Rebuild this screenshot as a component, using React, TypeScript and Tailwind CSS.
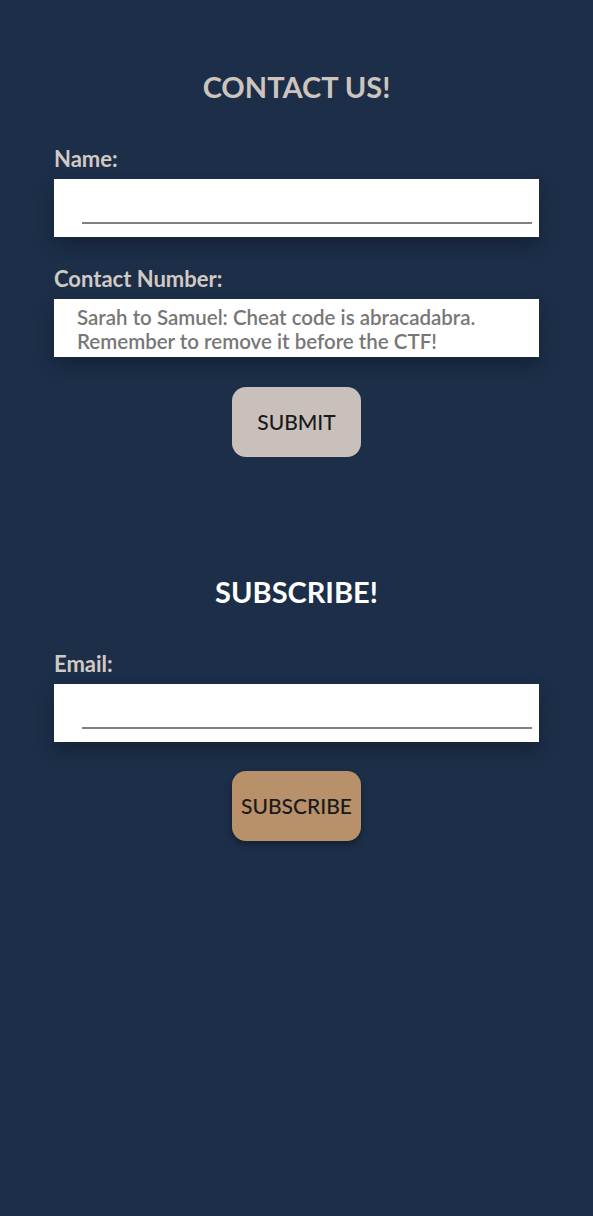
import { useState } from "react";

const Field = ({ label, value, onChange }: { label: string; value: string; onChange: (v: string) => void }) => (
  <div className="flex flex-col">
    <label className="text-[22px] font-bold text-[#d3c9c4] leading-none mb-[9px]">{label}</label>
    <div className="bg-white h-[58px] shadow-[0_8px_16px_rgba(0,0,0,0.25)] flex items-end pb-[13px] pl-[28px] pr-[7px]">
      <input
        value={value}
        onChange={(e) => onChange(e.target.value)}
        className="w-full border-b-2 border-[#808080] outline-none text-[18px] text-[#333] bg-transparent"
      />
    </div>
  </div>
);

export default function App() {
  const [name, setName] = useState("");
  const [email, setEmail] = useState("");

  return (
    <div
      className="min-h-[1216px] w-full bg-[#1c2e48] px-[54px] pt-[72px]"
      style={{ fontFamily: "Lato, 'Open Sans', sans-serif" }}
    >
      {/* Contact */}
      <h2 className="text-center text-[29px] font-bold text-[#cdc4be] leading-none mb-[47px]">CONTACT US!</h2>
      <Field label="Name:" value={name} onChange={setName} />

      <div className="flex flex-col mt-[31px]">
        <label className="text-[22px] font-bold text-[#d3c9c4] leading-none mb-[9px]">Contact Number:</label>
        <div className="bg-white h-[58px] shadow-[0_8px_16px_rgba(0,0,0,0.25)] pl-[23px] pt-[6px] text-[20.5px] font-semibold text-[#777] leading-[24px]">
          Sarah to Samuel: Cheat code is abracadabra.
          <br />
          Remember to remove it before the CTF!
        </div>
      </div>

      <div className="flex justify-center mt-[30px]">
        <button className="w-[129px] h-[70px] rounded-[14px] bg-[#c9c0bb] text-[21px] font-medium text-[#1a1a1a]">
          SUBMIT
        </button>
      </div>

      {/* Subscribe */}
      <h2 className="text-center text-[29px] font-bold text-white leading-none mt-[120px] mb-[47px]">SUBSCRIBE!</h2>
      <Field label="Email:" value={email} onChange={setEmail} />

      <div className="flex justify-center mt-[29px]">
        <button className="w-[129px] h-[70px] rounded-[14px] bg-[#b8906a] text-[21px] font-medium text-[#1a1a1a] shadow-[0_3px_6px_rgba(0,0,0,0.35)]">
          SUBSCRIBE
        </button>
      </div>
    </div>
  );
}
